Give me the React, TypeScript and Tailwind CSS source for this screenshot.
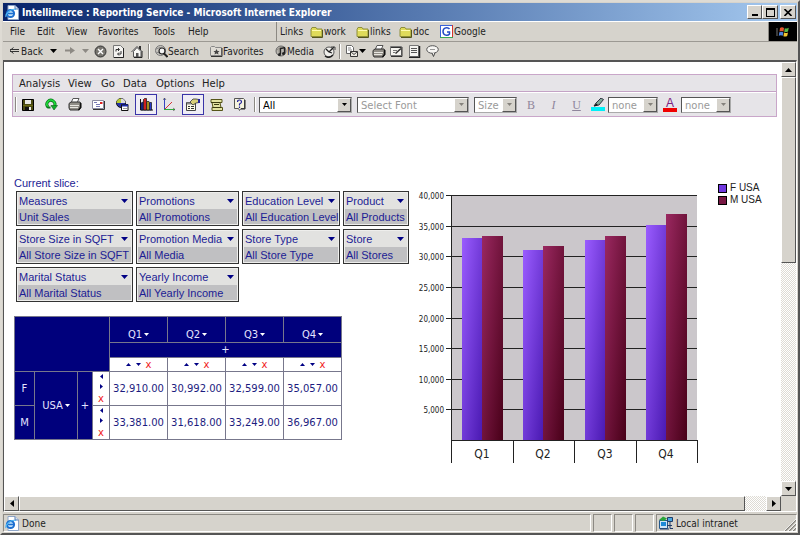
import React from "react";

type Kids = { children?: React.ReactNode };

const raised = "border border-t-white border-l-white border-r-[#555] border-b-[#555] bg-[#d6d3cc]";
const ui = "font-['DejaVu_Sans_Condensed','DejaVu_Sans',sans-serif] text-[10px]";
const verdana = "font-['DejaVu_Sans',sans-serif] text-[10px]";
const arial = "font-['Liberation_Sans',sans-serif] text-[11px]";

function Svg({ w = 14, h = 14, children }: Kids & { w?: number; h?: number }) {
  return (
    <svg width={w} height={h} viewBox={`0 0 ${w} ${h}`} className="shrink-0" aria-hidden="true">
      {children}
    </svg>
  );
}

type Dir = "up" | "down" | "left" | "right";
const triPaths: Record<Dir, string> = {
  up: "M0 4h7L3.5 0z",
  down: "M0 0h7L3.5 4z",
  left: "M4 0v7L0 3.5z",
  right: "M0 0v7l4-3.5z",
};
const smallTriPaths: Record<Dir, string> = {
  up: "M0 3h5L2.5 0z",
  down: "M0 0h5L2.5 3z",
  left: "M3 0v5L0 2.5z",
  right: "M0 0v5l3-2.5z",
};

function Tri({ dir = "down", color = "#000", small = false }: { dir?: Dir; color?: string; small?: boolean }) {
  const flat = dir === "up" || dir === "down";
  const long = small ? 5 : 7;
  const short = small ? 3 : 4;
  return (
    <Svg w={flat ? long : short} h={flat ? short : long}>
      <path d={small ? smallTriPaths[dir] : triPaths[dir]} fill={color} />
    </Svg>
  );
}

function IePage() {
  return (
    <Svg w={14} h={15}>
      <path d="M3 .5h7l3.500 3.500v10.500H3z" fill="#fff" stroke="#8fa6c8" />
      <path d="M10 .5V4h3.500" fill="#d5e2f4" stroke="#5c7cb0" />
      <circle cx="5.500" cy="8.500" r="3.600" fill="#bfe0fa" stroke="#1d6fd0" strokeWidth="2" />
      <path d="M3 8.500h6" stroke="#1d6fd0" strokeWidth="1.500" />
      <path d="M1 12C0 9 6 3 11 4.500" fill="none" stroke="#4bb3f2" strokeWidth="1.200" />
    </Svg>
  );
}

function Folder() {
  return (
    <Svg w={13} h={12}>
      <path d="M1 3.500l1-2h4l1 1.500h5v7.500H1z" fill="#dfdb5a" stroke="#8f8f3a" />
      <path d="M2 4.500h9" stroke="#fffbb0" />
      <path d="M12.500 4v7.500H2" fill="none" stroke="#55551c" />
    </Svg>
  );
}

function GoogleIcon() {
  return (
    <Svg w={13} h={13}>
      <rect width="13" height="13" fill="#fff" />
      <path d="M0 .5h12" stroke="#3a62d8" />
      <path d="M.5 0v12" stroke="#3a62d8" />
      <path d="M12.500 0v12" stroke="#d8352c" />
      <path d="M0 12.500h13" stroke="#3aa652" />
      <path d="M9.500 4C8 2 3 2.200 3 6.500S8 11 9.500 9V7H7" fill="none" stroke="#2249c4" strokeWidth="1.500" />
    </Svg>
  );
}

function WinFlag() {
  return (
    <Svg w={14} h={12}>
      <path d="M4 2q2-1.500 4 0L7.500 5.500q-2-1-4 0z" fill="#e5552d" />
      <path d="M8.800 2.200q2 1 4-.4L12 5.500q-2 1-3.800.3z" fill="#58b547" />
      <path d="M3.300 6.300q2-1 4 0L6.800 9.800q-2-1-4 0z" fill="#4d83dd" />
      <path d="M8 6.600q2 1 4-.2L11.200 10q-2 1-3.800.2z" fill="#f2c531" />
      <path d="M0 3h2M0 5h2M0 7h2M0 9h2" stroke="#777" />
    </Svg>
  );
}

const BackArrow = () => (
  <Svg w={10} h={8}>
    <path d="M4.500 .5L1 3.500l3.500 3M1 2.500h9M1 4.500h9" fill="none" stroke="#333" />
  </Svg>
);
const FwdArrow = () => (
  <Svg w={10} h={8}>
    <path d="M0 2.500h5V0l5 3.500L5 7V4.500H0z" fill="#8d8a84" />
  </Svg>
);
const StopIcon = () => (
  <Svg w={13} h={13}>
    <circle cx="6.500" cy="6.500" r="5.500" fill="#77756f" stroke="#333" />
    <path d="M4 4l5 5M9 4L4 9" stroke="#fff" strokeWidth="1.400" />
  </Svg>
);
const RefreshPage = () => (
  <Svg w={11} h={13}>
    <path d="M.5.5h7l3 3v9H.5z" fill="#f4f3f0" stroke="#777" />
    <path d="M10.500 3v9.500H1" fill="none" stroke="#222" />
    <path d="M3 6.500V4.500h3M5 3l1.500 1.500L5 6M8 6v3H5M6 7.500L4.500 9 6 10.500" fill="none" stroke="#333" />
  </Svg>
);
const HomeIcon = () => (
  <Svg w={13} h={13}>
    <path d="M.5 7L6 1.500 11.500 7" fill="#eee" stroke="#444" />
    <path d="M8.500 1v3M9.500 1v4" stroke="#333" />
    <path d="M2.500 6.500v5.500h7.500V6.500L6 2.500z" fill="#f8f8f5" stroke="#555" />
    <path d="M5 8h2.500v4H5z" fill="#555" />
    <path d="M11 6.500V12.500H3" fill="none" stroke="#222" />
  </Svg>
);
const SearchGlobe = () => (
  <Svg w={13} h={13}>
    <circle cx="5.500" cy="5.500" r="5" fill="#c9c6c0" stroke="#777" />
    <path d="M1 4q4-3 8 0M1 8q2-2 4 1" fill="none" stroke="#888" />
    <circle cx="7" cy="6" r="3" fill="#f4f4f4" stroke="#222" strokeWidth="1.200" />
    <path d="M9 8.500l3.500 3.500" stroke="#222" strokeWidth="2" />
  </Svg>
);
const FavFolder = () => (
  <Svg w={13} h={12}>
    <path d="M.5 2.500l1-1h3l1 1h6v8H.5z" fill="#dedbd4" stroke="#888" />
    <path d="M12 3v8.500H1" fill="none" stroke="#333" />
    <path d="M6.500 4l1 2h2L8 7.500l.5 2-2-1-2 1 .5-2L3.500 6h2z" fill="#444" />
  </Svg>
);
const MediaIcon = () => (
  <Svg w={12} h={13}>
    <circle cx="6" cy="6" r="5" fill="#bbb8b1" stroke="#666" />
    <path d="M1 6q5-6 10 0M6 1q-4 5 0 10" fill="none" stroke="#8a8780" />
    <path d="M5.500 9V3.500l4-1V8" fill="none" stroke="#222" strokeWidth="1.300" />
    <circle cx="4.500" cy="9.500" r="1.500" fill="#222" />
    <circle cx="8.500" cy="8.500" r="1.500" fill="#222" />
  </Svg>
);
const HistoryIcon = () => (
  <Svg w={13} h={13}>
    <circle cx="6" cy="7" r="5" fill="#f0efeb" stroke="#555" />
    <path d="M6 7l5-5M6 7l3 1M3 4l3 3" stroke="#222" strokeWidth="1.300" />
    <path d="M2 11q4 3 8-1" fill="none" stroke="#222" strokeWidth="1.500" />
    <path d="M8 2h4v3" fill="none" stroke="#444" />
  </Svg>
);
const MailIcon = () => (
  <Svg w={14} h={13}>
    <path d="M1.500.5h5l2 2v6h-7z" fill="#fff" stroke="#666" />
    <path d="M3 3h3M3 5h4" stroke="#888" />
    <path d="M5.500 6.500h7v5h-7z" fill="#ece9e2" stroke="#333" />
    <path d="M5.500 6.500l3.500 3 3.500-3" fill="none" stroke="#444" />
  </Svg>
);
const PrintIcon = () => (
  <Svg w={14} h={13}>
    <path d="M5 .5h6L9 5H3z" fill="#fff" stroke="#555" />
    <path d="M1 5.500l2-1.500h9l1 1.500v4L11 12H2L1 10z" fill="#918e87" stroke="#333" />
    <path d="M2 7.500h9M2 9.500h8" stroke="#e8e6e0" />
    <path d="M12.500 5v4.500L10.500 12" fill="none" stroke="#111" strokeWidth="1.400" />
  </Svg>
);
const EditIcon = () => (
  <Svg w={13} h={12}>
    <path d="M.5 1.500h11v9H.5z" fill="#f5f4f0" stroke="#777" />
    <path d="M1 2.500h10M12 2v9.500H1" fill="none" stroke="#333" />
    <path d="M3 5.500h4M3 7.500h2" stroke="#777" />
    <path d="M5.500 8.500L11 3.500" stroke="#333" strokeWidth="1.600" />
  </Svg>
);
const NotesIcon = () => (
  <Svg w={13} h={13}>
    <path d="M1.500.5h9v11h-9z" fill="#f5f4f0" stroke="#777" />
    <path d="M3 3.500h6M3 5.500h6M3 7.500h6" stroke="#555" />
    <path d="M11.500 1v11.500H1" fill="none" stroke="#222" strokeWidth="1.500" />
  </Svg>
);
const DiscussIcon = () => (
  <Svg w={13} h={12}>
    <ellipse cx="6.500" cy="4.500" rx="5.800" ry="3.800" fill="#f7f6f3" stroke="#555" />
    <path d="M6 8l1.500 3.500L9 7.500" fill="#f7f6f3" stroke="#444" />
    <path d="M4 4.500h5" stroke="#999" />
  </Svg>
);

const SaveDisk = () => (
  <Svg w={12} h={12}>
    <path d="M.5.5h11v11h-11z" fill="#4a4a12" stroke="#000" />
    <path d="M3 1h6v4H3z" fill="#e8e8e4" />
    <path d="M1 6h10v1H1z" fill="#6b6b14" />
    <path d="M3 8h6v3H3z" fill="#111" />
    <path d="M7 8h2v3H7z" fill="#eee" />
  </Svg>
);
const RefreshGreen = () => (
  <Svg w={13} h={13}>
    <path d="M3 9A4 4 0 1 1 9.500 8" fill="none" stroke="#0a7a1a" strokeWidth="3" />
    <path d="M3 9A4 4 0 1 1 9.500 8" fill="none" stroke="#1ee03c" strokeWidth="1.500" />
    <path d="M6 7.500h6.500L9 12z" fill="#0fae2a" stroke="#075c14" strokeWidth=".6" />
    <path d="M1 8.500h4.500v2H2.500z" fill="#0a7a1a" />
  </Svg>
);
const CardIcon = () => (
  <Svg w={13} h={10}>
    <path d="M.5.500h11v8H.5z" fill="#fff" stroke="#8a8aa0" />
    <path d="M2 2.500h3M4 6.500h4M4 4.500h4" stroke="#7777b5" />
    <path d="M8 2h2.500v2H8z" fill="#d22" />
    <path d="M12.500 1v8.500H1" fill="none" stroke="#333" />
  </Svg>
);
const CubeIcon = () => (
  <Svg w={14} h={13}>
    <circle cx="6" cy="5" r="4.500" fill="#2530a8" stroke="#111" />
    <path d="M6 5V.5A4.500 4.500 0 0 0 1.500 5z" fill="#b7ca35" />
    <path d="M6 5h4.500A4.500 4.500 0 0 0 6 .5z" fill="#ddd" />
    <path d="M6.500 6.500h6.500v6H6.500z" fill="#fff" stroke="#111" />
    <path d="M7 7.500h6" stroke="#1d2ca8" strokeWidth="2" />
    <path d="M8 10.500h4" stroke="#999" />
  </Svg>
);
const BarsIcon = () => (
  <Svg w={14} h={13}>
    <path d="M1.500 1v11H14" fill="none" stroke="#111" />
    <path d="M2 5l2-1v8H2z" fill="#1d2ca8" stroke="#111" strokeWidth=".6" />
    <path d="M4.500 1.500l1-1h2v11.500h-3z" fill="#cf1f1f" stroke="#111" strokeWidth=".7" />
    <path d="M8 3.500h2v8.500H8z" fill="#f0d020" stroke="#111" strokeWidth=".7" />
    <path d="M10.500 4.500h2v7.500h-2z" fill="#2739c8" stroke="#111" strokeWidth=".7" />
  </Svg>
);
const AxesIcon = () => (
  <Svg w={13} h={13}>
    <path d="M1.500 0v11" stroke="#3744c0" />
    <path d="M1 11.500h11" stroke="#2fae3c" />
    <path d="M2 11L9 4" stroke="#d43434" />
    <path d="M0 2l1.500-2L3 2M10 10l2 1.500L10 13" fill="none" stroke="#555" strokeWidth=".7" />
  </Svg>
);
const PropsIcon = () => (
  <Svg w={14} h={13}>
    <path d="M.5 4.500h9v8h-9z" fill="#fffde8" stroke="#444" />
    <path d="M1 5.500h8" stroke="#888" strokeWidth="2" />
    <path d="M2 8.500h2M2 10.500h2M5 8.500h3M5 10.500h3" stroke="#333" />
    <path d="M4 4l3-3h3l3 .5v3L10 5 7 7z" fill="#d8cf78" stroke="#333" strokeWidth=".8" />
    <path d="M12 1h2v4h-2z" fill="#26269c" />
  </Svg>
);
const ScrollIcon = () => (
  <Svg w={13} h={12}>
    <path d="M1 .5h11v3h-2l1 5h1.500v3H2v-3h1l-1-5H1z" fill="#e3e4a2" stroke="#555518" />
    <path d="M1 3.500h9M3 8.500h8M4 5.500h5" stroke="#3c3c10" />
  </Svg>
);
const HelpIcon = () => (
  <Svg w={12} h={13}>
    <path d="M.5.5h9l1 1v9H7l-1.500 2-1-2h-4z" fill="#f6f4df" stroke="#555" />
    <path d="M11 2v9H7" fill="none" stroke="#222" />
    <path d="M3.500 4q0-2 2-2t2 2q0 1-2 2v1.500M5.500 8.500V10" fill="none" stroke="#22229c" strokeWidth="1.200" />
  </Svg>
);
const Highlighter = () => (
  <Svg w={14} h={14}>
    <path d="M0 9h14v4H0z" fill="#00f0f8" />
    <path d="M3 8l2-3 5-5 2.500 1.500L8 7z" fill="#7fa898" stroke="#223" strokeWidth=".9" />
    <path d="M3 8.500l2-3 2 1.500z" fill="#111" />
  </Svg>
);

function Bar() {
  return <span className="block h-[15px] w-[2px] shrink-0 border-l border-[#8c8983] bg-white" />;
}

const browserMenus = [
  { label: "File", w: "w-[27px]" },
  { label: "Edit", w: "w-[29px]" },
  { label: "View", w: "w-[32px]" },
  { label: "Favorites", w: "w-[55px]" },
  { label: "Tools", w: "w-[35px]" },
  { label: "Help", w: "w-[30px]" },
];

function TitleBar() {
  return (
    <header className="flex h-[18px] items-center bg-linear-to-r from-[#0a246a] to-[#a6caf0] pr-px pl-[2px]">
      <IePage />
      <h1 className="ml-[3px] flex-1 font-['DejaVu_Sans_Condensed','DejaVu_Sans',sans-serif] text-[10px] font-bold whitespace-nowrap text-white">
        Intellimerce : Reporting Service - Microsoft Internet Explorer
      </h1>
      <button aria-label="Minimize" className={`flex h-[14px] w-[15px] items-end justify-center pb-[2px] ${raised}`}>
        <span className="h-[2px] w-[6px] bg-black" />
      </button>
      <button aria-label="Maximize" className={`flex h-[14px] w-[16px] items-center justify-center ${raised}`}>
        <span className="h-[9px] w-[9px] border border-t-2 border-black" />
      </button>
      <button aria-label="Close" className={`ml-[2px] flex h-[14px] w-[16px] items-center justify-center ${raised}`}>
        <Svg w={8} h={7}>
          <path d="M.5 0l7 7M7.500 0l-7 7" stroke="#000" strokeWidth="1.600" />
        </Svg>
      </button>
    </header>
  );
}

function LinkItem({ label, icon, w }: { label: string; icon: React.ReactNode; w: string }) {
  return (
    <a href="#" className={`flex items-center ${w}`}>
      {icon}
      <span className="ml-px">{label}</span>
    </a>
  );
}

function BrowserBars() {
  return (
    <div className={`${ui} text-[#222]`}>
      <div className="flex h-[20px] items-stretch border-t border-white">
        <nav className="flex w-[273px] items-center pl-[7px]">
          {browserMenus.map((m) => (
            <button key={m.label} className={`shrink-0 text-left ${m.w}`}>
              {m.label}
            </button>
          ))}
        </nav>
        <div className="flex flex-1 items-center border-l border-[#8c8983]">
          <span className="w-[33px] pl-[3px]">Links</span>
          <LinkItem label="work" icon={<Folder />} w="w-[46px]" />
          <LinkItem label="links" icon={<Folder />} w="w-[43px]" />
          <LinkItem label="doc" icon={<Folder />} w="w-[41px]" />
          <LinkItem label="Google" icon={<GoogleIcon />} w="w-[60px]" />
        </div>
        <div className="flex w-[29px] items-center justify-center border-l border-[#8c8983] bg-black">
          <WinFlag />
        </div>
      </div>
      <div className="flex h-[19px] items-center border-t border-[#9c9993] pl-[6px]">
        <button className="flex w-[41px] items-center gap-[2px]">
          <BackArrow />
          Back
        </button>
        <button aria-label="Back history" className="w-[15px]"><Tri /></button>
        <button aria-label="Forward" className="w-[17px]"><FwdArrow /></button>
        <button aria-label="Forward history" className="w-[12px]"><Tri color="#8d8a84" /></button>
        <button aria-label="Stop" className="w-[19px]"><StopIcon /></button>
        <button aria-label="Refresh" className="w-[18px]"><RefreshPage /></button>
        <button aria-label="Home" className="w-[17px]"><HomeIcon /></button>
        <Bar />
        <button className="ml-[5px] flex w-[55px] items-center"><SearchGlobe />Search</button>
        <button className="flex w-[65px] items-center"><FavFolder />Favorites</button>
        <button className="flex w-[48px] items-center"><MediaIcon />Media</button>
        <button aria-label="History" className="w-[16px]"><HistoryIcon /></button>
        <Bar />
        <button className="ml-[4px] flex w-[27px] items-center" aria-label="Mail"><MailIcon /><Tri /></button>
        <button aria-label="Print" className="w-[18px]"><PrintIcon /></button>
        <button aria-label="Edit" className="w-[18px]"><EditIcon /></button>
        <button aria-label="Notes" className="w-[18px]"><NotesIcon /></button>
        <button aria-label="Discuss" className="w-[18px]"><DiscussIcon /></button>
      </div>
    </div>
  );
}

const reportMenus = [
  { label: "Analysis", w: "w-[49px]" },
  { label: "View", w: "w-[33px]" },
  { label: "Go", w: "w-[22px]" },
  { label: "Data", w: "w-[33px]" },
  { label: "Options", w: "w-[46px]" },
  { label: "Help", w: "w-[30px]" },
];

const tools = [
  { label: "Save", icon: <SaveDisk />, on: false },
  { label: "Reload", icon: <RefreshGreen />, on: false },
  { label: "Print report", icon: <PrintIcon />, on: false },
  { label: "Send", icon: <CardIcon />, on: false },
  { label: "Cube", icon: <CubeIcon />, on: false },
  { label: "Chart", icon: <BarsIcon />, on: true },
  { label: "Axes", icon: <AxesIcon />, on: false },
  { label: "Properties", icon: <PropsIcon />, on: true },
  { label: "Script", icon: <ScrollIcon />, on: false },
  { label: "Help topics", icon: <HelpIcon />, on: false },
];

function Picker({ label, value, w, off = true }: { label: string; value: string; w: string; off?: boolean }) {
  return (
    <span className={`relative block h-[16px] ${w}`}>
      <select
        aria-label={label}
        disabled={off}
        className={`block h-full w-full appearance-none border border-t-[#555] border-l-[#555] border-r-[#aaa] border-b-[#aaa] bg-white pr-[16px] pl-[3px] ${verdana} ${off ? "text-[#9a9a9a]" : "text-black"} opacity-100`}
      >
        <option>{value}</option>
      </select>
      <span className={`pointer-events-none absolute top-px right-px flex h-[14px] w-[14px] items-center justify-center ${raised}`}>
        <Tri small color={off ? "#85827c" : "#000"} />
      </span>
    </span>
  );
}

function ReportToolbar() {
  return (
    <div className={`mr-[4px] border border-[#c9a6c9] bg-[#e6e4e8] ${verdana} text-[#222]`}>
      <nav className="flex h-[17px] items-center border-b border-[#c4a3c6] pl-[6px]">
        {reportMenus.map((m) => (
          <button key={m.label} className={`shrink-0 text-left ${m.w}`}>
            {m.label}
          </button>
        ))}
      </nav>
      <div className="flex h-[24px] items-center border-t border-white pl-[2px]">
        <Bar />
        <div className="flex w-[234px] shrink-0 justify-between">
          {tools.map((t) => (
            <button
              key={t.label}
              aria-label={t.label}
              className={`flex h-[21px] w-[22px] items-center justify-center ${t.on ? "border border-[#3a34a8] bg-[#efedf5]" : ""}`}
            >
              {t.icon}
            </button>
          ))}
        </div>
        <span className="mx-[3px]"><Bar /></span>
        <Picker label="Filter" value="All" w="w-[93px]" off={false} />
        <span className="w-[5px]" />
        <Picker label="Font" value="Select Font" w="w-[112px]" />
        <span className="w-[5px]" />
        <Picker label="Font size" value="Size" w="w-[43px]" />
        <div className="ml-[3px] flex font-['Liberation_Serif',serif] text-[12px] text-[#8f869c]">
          <button className="w-[22px]">B</button>
          <button className="w-[23px] italic">I</button>
          <button className="w-[23px] underline">U</button>
        </div>
        <span className="ml-[3px] w-[17px]"><Highlighter /></span>
        <Picker label="Highlight colour" value="none" w="w-[50px]" />
        <button aria-label="Text colour" className="ml-[5px] flex w-[18px] flex-col">
          <span aria-hidden="true" className="w-[14px] border-b-4 border-[#f00000] text-center font-['Liberation_Sans',sans-serif] text-[12px] leading-[10px] text-[#7a2080]">
            A
          </span>
        </button>
        <Picker label="Font colour" value="none" w="w-[50px]" />
      </div>
    </div>
  );
}

const slices = [
  [["Measures", "Unit Sales"], ["Promotions", "All Promotions"], ["Education Level", "All Education Level"], ["Product", "All Products"]],
  [["Store Size in SQFT", "All Store Size in SQFT"], ["Promotion Media", "All Media"], ["Store Type", "All Store Type"], ["Store", "All Stores"]],
  [["Marital Status", "All Marital Status"], ["Yearly Income", "All Yearly Income"]],
];

function Slices() {
  return (
    <section className={`${arial} leading-[16px] text-[#1c1c94]`}>
      <h2>Current slice:</h2>
      <div className="ml-[2px] grid grid-cols-[117px_103px_98px_66px] gap-[3px]">
        {slices.flat().map(([name, value]) => (
          <div key={name} className="h-[35px] border border-[#333] bg-[#eeeeec] p-px whitespace-nowrap">
            <button className="flex h-[16px] w-full items-center justify-between bg-[#e2e2e0] pr-[3px] pl-px">
              {name}
              <Tri color="#000084" />
            </button>
            <div className="h-[15px] bg-[#c0c0c2] pl-px">{value}</div>
          </div>
        ))}
      </div>
    </section>
  );
}

const quarters = ["Q1", "Q2", "Q3", "Q4"];
const rows = [
  { name: "F", values: [32910, 30992, 32599, 35057] },
  { name: "M", values: [33381, 31618, 33249, 36967] },
];
const money = (n: number) => n.toLocaleString("en-US", { minimumFractionDigits: 2 });

function PivotTable() {
  const line = "border border-[#77778c] p-0 font-normal";
  const head = `${line} bg-[#00007c] text-[#e4e4ff]`;
  return (
    <table className={`mt-[14px] w-[328px] table-fixed border-collapse text-center ${verdana} text-[#1c1c80]`}>
      <colgroup>
        <col className="w-[20px]" />
        <col className="w-[43px]" />
        <col className="w-[15px]" />
        <col className="w-[17px]" />
        <col span={4} />
      </colgroup>
      <thead>
        <tr className="h-[26px]">
          <td colSpan={4} rowSpan={3} className={head} />
          {quarters.map((q) => (
            <th key={q} className={`${head} align-bottom`}>
              <button className="inline-flex items-center gap-[2px]">
                {q}
                <Tri small color="#fff" />
              </button>
            </th>
          ))}
        </tr>
        <tr className="h-[15px] leading-[12px]">
          <th colSpan={4} className={head}>
            <button className="block w-full">+</button>
          </th>
        </tr>
        <tr className="h-[14px] leading-[12px]">
          {quarters.map((q) => (
            <td key={q} className={line}>
              <div className="flex items-center justify-center gap-[5px]">
                <Tri small dir="up" color="#000084" />
                <Tri small color="#000084" />
                <button aria-label={`Remove ${q}`} className="text-[#f02020]">x</button>
              </div>
            </td>
          ))}
        </tr>
      </thead>
      <tbody>
        {rows.map((r, i) => (
          <tr key={r.name} className="h-[34px]">
            <th className={head}>{r.name}</th>
            {i === 0 && (
              <>
                <th rowSpan={2} className={head}>
                  <button className="inline-flex items-center gap-[2px]">
                    USA
                    <Tri small color="#fff" />
                  </button>
                </th>
                <th rowSpan={2} className={head}>
                  <button>+</button>
                </th>
              </>
            )}
            <td className={line}>
              <div className="flex flex-col items-center gap-[5px] leading-[10px]">
                <Tri small dir="left" color="#000084" />
                <Tri small dir="right" color="#000084" />
                <button aria-label={`Remove ${r.name}`} className="text-[#f02020]">x</button>
              </div>
            </td>
            {r.values.map((v) => (
              <td key={v} className={line}>{money(v)}</td>
            ))}
          </tr>
        ))}
      </tbody>
    </table>
  );
}

function Chart() {
  const base = 265;
  const left = 37;
  const span = 245;
  const y = (v: number) => Math.round(base - (v / 40000) * span);
  const ticks = [5000, 10000, 15000, 20000, 25000, 30000, 35000, 40000];
  return (
    <svg width="290" height="295" viewBox="0 0 290 295" className="shrink-0" role="img" aria-label="Unit sales by quarter">
      <defs>
        <linearGradient id="f" x1="0" y1="0" x2="1" y2="1">
          <stop offset="0" stopColor="#9a5cff" />
          <stop offset="1" stopColor="#4818b0" />
        </linearGradient>
        <linearGradient id="m" x1="0" y1="0" x2="1" y2="1">
          <stop offset="0" stopColor="#9a2860" />
          <stop offset="1" stopColor="#480018" />
        </linearGradient>
      </defs>
      <rect x={left} y="20" width={span} height={span} fill="#cbc7cb" />
      <g shapeRendering="crispEdges">
        {ticks.map((t) => (
          <path key={t} d={`M31 ${y(t) + 0.5}H${left + span}`} stroke="#222" />
        ))}
        <path d={`M${left - 0.5} 20V288M${left} ${base + 0.5}h${span + 1}`} stroke="#222" />
      </g>
      {ticks.map((t) => (
        <text key={t} x="29" y={y(t) + 4} textAnchor="end" className="fill-[#222] font-['DejaVu_Sans_Condensed',sans-serif] text-[8px]">
          {t.toLocaleString("en-US")}
        </text>
      ))}
      {quarters.map((q, i) => {
        const x = left + Math.round((i * span) / 4);
        return (
          <g key={q} shapeRendering="crispEdges">
            <rect x={x + 10} y={y(rows[0].values[i])} width="21" height={base - y(rows[0].values[i])} fill="url(#f)" />
            <rect x={x + 30} y={y(rows[1].values[i])} width="21" height={base - y(rows[1].values[i])} fill="url(#m)" />
            <path d={`M${x + 61.5} ${base}V288`} stroke="#222" />
            <text x={x + 30} y="283" textAnchor="middle" className="fill-[#222] font-['DejaVu_Sans_Condensed',sans-serif] text-[12px]">
              {q}
            </text>
          </g>
        );
      })}
    </svg>
  );
}

function Legend() {
  return (
    <ul className="mt-[7px] ml-[13px] font-['Liberation_Sans',sans-serif] text-[10px] leading-[12px] text-[#222]">
      <li className="flex items-center gap-[3px]">
        <span className="h-[9px] w-[9px] border border-black bg-[#7038e0]" />F USA
      </li>
      <li className="flex items-center gap-[3px]">
        <span className="h-[9px] w-[9px] border border-black bg-[#781844]" />M USA
      </li>
    </ul>
  );
}

const track = "bg-[repeating-conic-gradient(#ffffff_0_25%,#dedbd4_0_50%)] bg-size-[2px_2px]";

function ScrollButton({ dir, label }: { dir: Dir; label: string }) {
  return (
    <button aria-label={label} className={`flex h-[15px] w-[15px] shrink-0 items-center justify-center ${raised}`}>
      <Tri dir={dir} />
    </button>
  );
}

function StatusBar() {
  const cell = "border border-t-[#8c8983] border-l-[#8c8983] border-r-white border-b-white";
  return (
    <footer className={`mt-[2px] flex h-[18px] gap-[2px] ${ui} text-[#222]`}>
      <div className={`flex flex-1 items-center gap-[3px] pl-px ${cell}`}>
        <IePage />
        Done
      </div>
      <div className={`w-[19px] ${cell}`} />
      <div className={`w-[19px] ${cell}`} />
      <div className={`w-[19px] ${cell}`} />
      <div className={`flex w-[141px] items-center gap-[3px] pl-px ${cell}`}>
        <Svg w={15} h={14}>
          <path d="M1.500 4.500h8v8h-8z" fill="#cfe6f8" stroke="#24588c" />
          <path d="M3 6h5v4H3z" fill="#1c8ad8" />
          <path d="M1 4l4-3.500 4 2L6 5z" fill="#2ba53a" />
          <path d="M9.500 1.500h5v4h-5z" fill="#4aa8e0" stroke="#223c66" />
          <path d="M12 6v3M9 9.500h5M12 9v3.500h3M2 13h9" fill="none" stroke="#223c66" />
        </Svg>
        <span className="flex-1">Local intranet</span>
        <span className="self-end">
          <Svg w={12} h={12}>
            <path d="M1 12L12 1M5 12l7-7M9 12l3-3" stroke="#85827c" strokeWidth="1.500" />
            <path d="M0 12L12 0M4 12l8-8M8 12l4-4" stroke="#fff" strokeWidth=".8" />
          </Svg>
        </span>
      </div>
    </footer>
  );
}

export default function App() {
  return (
    <div className="flex min-h-screen flex-col border-2 border-t-[#dedbd4] border-r-[#555] border-b-[#555] border-l-[#dedbd4] bg-[#d6d3cc] p-px">
      <TitleBar />
      <BrowserBars />
      <div className="flex flex-1 flex-col border border-t-2 border-t-[#555] border-r-white border-b-white border-l-[#555]">
        <div className="flex flex-1">
          <main className="min-w-0 flex-1 overflow-hidden bg-white pt-[12px] pl-[8px]">
            <ReportToolbar />
            <div className="mt-[58px] flex pl-[2px]">
              <div className="w-[401px] shrink-0">
                <Slices />
                <PivotTable />
              </div>
              <Chart />
              <Legend />
            </div>
          </main>
          <div className={`flex w-[15px] flex-col ${track}`}>
            <ScrollButton dir="up" label="Scroll up" />
            <div className={`grow-[185] ${raised}`} />
            <div className="grow-[220]" />
            <ScrollButton dir="down" label="Scroll down" />
          </div>
        </div>
        <div className="flex h-[15px]">
          <div className={`flex flex-1 ${track}`}>
            <ScrollButton dir="left" label="Scroll left" />
            <div className={`grow-[724] ${raised}`} />
            <div className="grow-[21]" />
            <ScrollButton dir="right" label="Scroll right" />
          </div>
          <div className="w-[15px]" />
        </div>
      </div>
      <StatusBar />
    </div>
  );
}
